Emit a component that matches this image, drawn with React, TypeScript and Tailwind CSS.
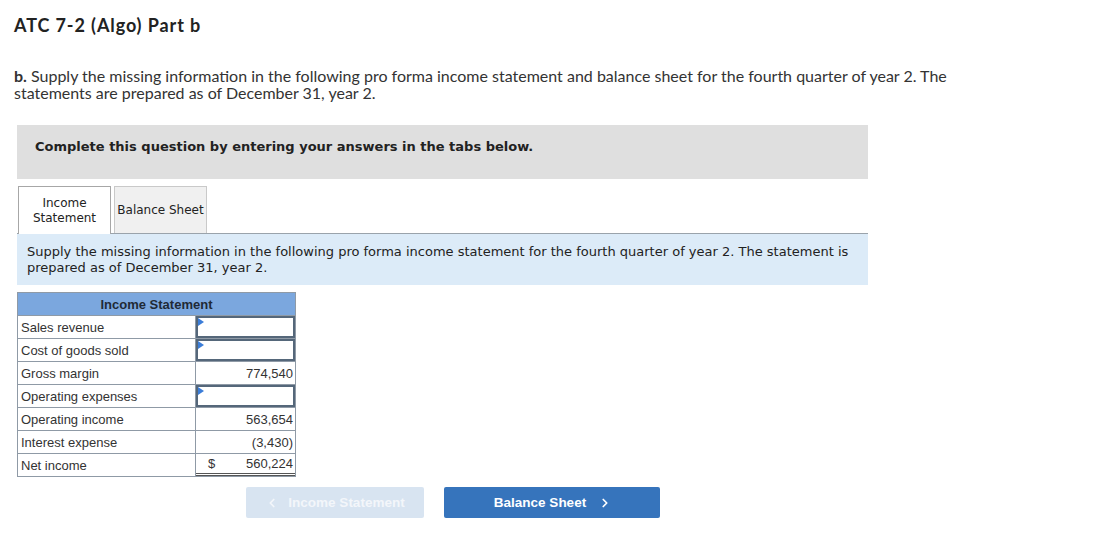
import React from "react";
import { ChevronLeft, ChevronRight } from "lucide-react";

const rows: { label: string; value?: string; input?: boolean; dollar?: boolean; last?: boolean }[] = [
  { label: "Sales revenue", input: true },
  { label: "Cost of goods sold", input: true },
  { label: "Gross margin", value: "774,540" },
  { label: "Operating expenses", input: true },
  { label: "Operating income", value: "563,654" },
  { label: "Interest expense", value: "(3,430)" },
  { label: "Net income", value: "560,224", dollar: true, last: true },
];

function InputCell() {
  return (
    <div className="relative h-full w-full border-2 border-[#55677a] bg-white">
      <div className="absolute left-0 top-0 h-0 w-0 border-y-[4px] border-l-[6px] border-y-transparent border-l-[#3b7dd8]" />
    </div>
  );
}

export default function App() {
  return (
    <div className="w-[1103px] h-[537px] bg-white text-[#333]">
      <div className="pl-[14px] pt-[13px] font-['Lato',sans-serif] text-[#222]">
        <h1 className="text-[18px] leading-[24px] font-bold tracking-[0.9px]">ATC 7-2 (Algo) Part b</h1>
        <p className="mt-[30px] w-[960px] text-[16px] leading-[17px] text-[#333]">
          <span className="font-bold">b.</span> Supply the missing information in the following pro forma income statement and balance sheet for the fourth quarter of year 2. The statements are prepared as of December 31, year 2.
        </p>
      </div>

      <div className="ml-[17px] w-[851px]">
        <div className="mt-[24px] h-[54px] bg-[#dfdfdf] pl-[18px] pt-[14px] font-['DejaVu_Sans',Verdana,sans-serif] text-[13px] leading-[16px] font-bold text-[#222]">
          Complete this question by entering your answers in the tabs below.
        </div>

        <div className="relative z-10 mt-[7px] -mb-px flex gap-[3px] pl-px font-['DejaVu_Sans',Verdana,sans-serif] text-[12px] leading-[15px] text-[#222]">
          <div className="flex h-[48px] w-[93px] flex-col items-center justify-center border border-b-0 border-[#a7a7a7] bg-white text-center">
            <span>Income</span>
            <span>Statement</span>
          </div>
          <div className="flex h-[47px] w-[93px] items-center justify-center border border-b-0 border-[#c9c9c9] bg-[#f0f0f0]">
            Balance Sheet
          </div>
        </div>

        <div className="h-[52px] border-t border-[#9aa3ab] bg-[#dcebf8] px-[10px] pt-[10px] font-['DejaVu_Sans',Verdana,sans-serif] text-[13px] leading-[16px] text-[#222]">
          Supply the missing information in the following pro forma income statement for the fourth quarter of year 2. The statement is prepared as of December 31, year 2.
        </div>

        <div className="mt-[7px] w-[279px] border-l border-r border-t border-[#8f9aa6] font-['Liberation_Sans',Arial,sans-serif] text-[13px] text-[#333]">
          <div className="flex h-[23px] items-center justify-center border-b border-[#8f9aa6] bg-[#7ba7de] pt-px font-bold text-[#1f2a36]">
            Income Statement
          </div>
          {rows.map((r) => (
            <div key={r.label} className="flex h-[23px] border-b border-[#8f9aa6]">
              <div className="flex w-[178px] items-center border-r border-[#8f9aa6] pl-[3px] pt-px">{r.label}</div>
              <div className={`flex-1 ${r.last ? "border-b-[3px] border-double border-[#555]" : ""}`}>
                {r.input ? (
                  <InputCell />
                ) : (
                  <div className="flex h-full items-center justify-between pl-[12px] pr-[2px] pt-px">
                    <span>{r.dollar ? "$" : ""}</span>
                    <span>{r.value}</span>
                  </div>
                )}
              </div>
            </div>
          ))}
        </div>

        <div className="mt-[10px] flex gap-[20px] pl-[229px] font-['Liberation_Sans',Arial,sans-serif] text-[13.5px] font-bold">
          <div className="flex h-[31px] w-[178px] items-center justify-center gap-[9px] rounded-[2px] bg-[#d8e4f1] pt-px text-[#f3f6fa]">
            <ChevronLeft size={14} strokeWidth={3} />
            <span>Income Statement</span>
          </div>
          <div className="flex h-[31px] w-[216px] items-center justify-center gap-[12px] rounded-[2px] bg-[#3674bc] pt-px pl-[2px] text-white">
            <span>Balance Sheet</span>
            <ChevronRight size={14} strokeWidth={3} />
          </div>
        </div>
      </div>
    </div>
  );
}
